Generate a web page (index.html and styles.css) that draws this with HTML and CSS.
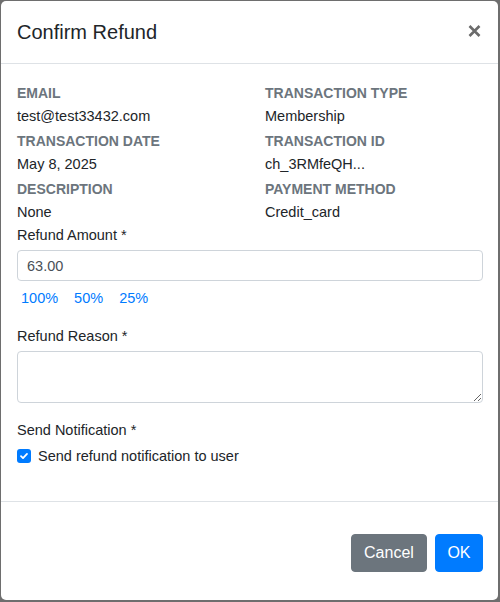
FILE: index.html
```html
<!DOCTYPE html>
<html>
<head>
<meta charset="utf-8">
<link rel="stylesheet" href="styles.css">
</head>
<body>
<div class="modal">
  <div class="modal-header">
    <h5 class="modal-title">Confirm Refund</h5>
    <button class="close" aria-label="Close">
      <svg width="13" height="12" viewBox="0 0 13 12"><path d="M1.5 1 L11.5 11 M11.5 1 L1.5 11" stroke="#6b6b6b" stroke-width="2.6" stroke-linecap="butt"/></svg>
    </button>
  </div>
  <div class="modal-body">
    <div class="details">
      <div class="item"><div class="label">Email</div><div class="value">test@test33432.com</div></div>
      <div class="item"><div class="label">Transaction Type</div><div class="value">Membership</div></div>
      <div class="item"><div class="label">Transaction Date</div><div class="value">May 8, 2025</div></div>
      <div class="item"><div class="label">Transaction ID</div><div class="value">ch_3RMfeQH...</div></div>
      <div class="item"><div class="label">Description</div><div class="value">None</div></div>
      <div class="item"><div class="label">Payment Method</div><div class="value">Credit_card</div></div>
    </div>
    <div class="field-label">Refund Amount *</div>
    <input class="form-control" type="text" value="63.00">
    <div class="percent-row">
      <button class="link-btn">100%</button>
      <button class="link-btn">50%</button>
      <button class="link-btn">25%</button>
    </div>
    <div class="field-label spaced">Refund Reason *</div>
    <textarea class="form-control textarea"></textarea>
    <div class="field-label spaced">Send Notification *</div>
    <label class="check-row">
      <span class="checkbox"><svg width="14" height="14" viewBox="0 0 14 14"><path d="M4 7.2 L6 9.1 L10 4.9" fill="none" stroke="#fff" stroke-width="1.8" stroke-linecap="round" stroke-linejoin="round"/></svg></span>
      <span>Send refund notification to user</span>
    </label>
  </div>
  <div class="modal-footer">
    <button class="btn btn-secondary">Cancel</button>
    <button class="btn btn-primary">OK</button>
  </div>
</div>
</body>
</html>
```
FILE: styles.css
```css
html, body {
  margin: 0;
  padding: 0;
}
body {
  background: #6e6e6e;
  font-family: "Liberation Sans", Arial, sans-serif;
  color: #212529;
  height: 602px;
  overflow: hidden;
}
.modal {
  margin: 1px 2px 0 1px;
  width: 497px;
  height: 599px;
  background: #fff;
  border-radius: 5px;
  display: flex;
  flex-direction: column;
  box-sizing: border-box;
}
.modal-header {
  display: flex;
  align-items: center;
  justify-content: space-between;
  padding: 16px 17px 16px 16px;
  border-bottom: 1px solid #dee2e6;
}
.modal-title {
  margin: 0;
  font-size: 20px;
  line-height: 30px;
  font-weight: 500;
  color: #212529;
}
.close {
  border: 0;
  background: transparent;
  padding: 0;
  margin: 0;
  width: 13px;
  height: 12px;
  display: flex;
  margin-top: -2px;
}
.modal-body {
  flex: 1;
  padding: 16px 16px 0 16px;
}
.details {
  display: grid;
  grid-template-columns: 248px 1fr;
}
.item {
  padding-top: 2px;
}
.label {
  font-size: 14px;
  line-height: 22px;
  font-weight: 700;
  text-transform: uppercase;
  color: #6c757d;
}
.value {
  font-size: 14.5px;
  line-height: 24px;
  color: #212529;
}
.field-label {
  font-size: 14.5px;
  line-height: 22px;
  color: #212529;
}
.field-label.spaced {
  margin-top: 16px;
}
.form-control {
  display: block;
  box-sizing: border-box;
  width: 466px;
  margin-top: 4px;
  height: 31px;
  padding: 0 9px;
  font-family: "Liberation Sans", Arial, sans-serif;
  font-size: 14.5px;
  color: #495057;
  border: 1px solid #ced4da;
  border-radius: 4px;
  background: #fff;
  outline: none;
}
.textarea {
  height: 52px;
  resize: vertical;
}
.percent-row {
  display: flex;
  gap: 8px;
  margin-top: 6px;
  height: 22px;
}
.link-btn {
  border: 0;
  background: transparent;
  padding: 0 4px;
  font-family: "Liberation Sans", Arial, sans-serif;
  font-size: 14.5px;
  line-height: 22px;
  color: #007bff;
}
.check-row {
  display: flex;
  align-items: center;
  gap: 7px;
  margin-top: 4px;
  height: 22px;
  font-size: 14.5px;
  color: #212529;
}
.checkbox {
  width: 14px;
  height: 14px;
  background: #007bff;
  border-radius: 3px;
  display: flex;
}
.modal-footer {
  border-top: 1px solid #dee2e6;
  display: flex;
  justify-content: flex-end;
  gap: 8px;
  padding: 32px 15px 28px 16px;
}
.btn {
  height: 38px;
  padding: 0 12px;
  border: 1px solid transparent;
  border-radius: 4px;
  font-family: "Liberation Sans", Arial, sans-serif;
  font-size: 16px;
  color: #fff;
}
.btn-secondary {
  background: #6c757d;
  border-color: #6c757d;
}
.btn-primary {
  background: #007bff;
  border-color: #007bff;
  padding: 0 11.5px;
}
```
